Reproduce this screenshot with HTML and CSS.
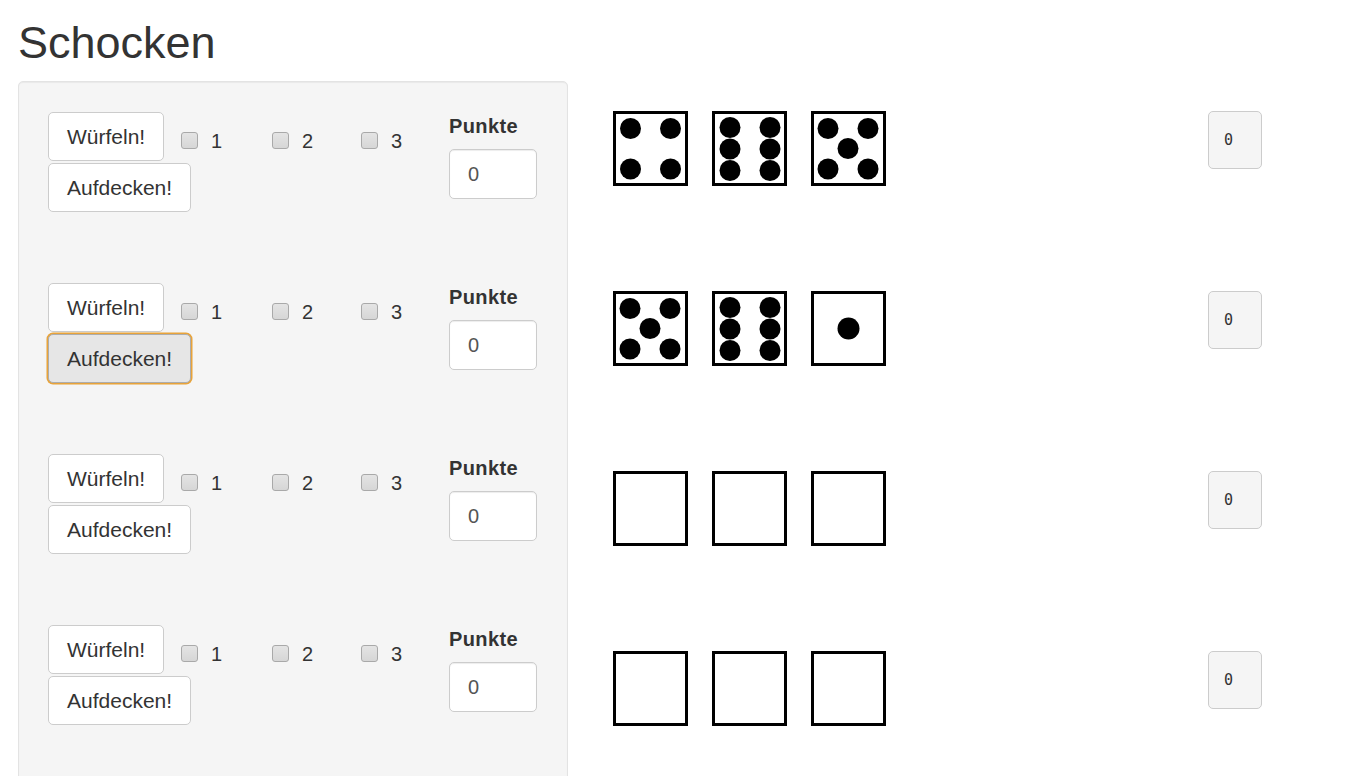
FILE: index.html
```html
<!DOCTYPE html>
<html lang="de">
<head>
<meta charset="utf-8">
<title>Schocken</title>
<link rel="stylesheet" href="styles.css">
</head>
<body>
<div class="page">
  <h1 class="title">Schocken</h1>
  <div class="layout">
    <div class="well">
      <div class="ctrl-row">
        <div class="btns">
          <button class="btn">Würfeln!</button>
          <button class="btn">Aufdecken!</button>
        </div>
        <label class="chk w1"><input type="checkbox"><span>1</span></label>
        <label class="chk w2"><input type="checkbox"><span>2</span></label>
        <label class="chk w3"><input type="checkbox"><span>3</span></label>
        <div class="score">
          <div class="score-label">Punkte</div>
          <input class="score-input" type="text" value="0">
        </div>
      </div>
      <div class="ctrl-row">
        <div class="btns">
          <button class="btn">Würfeln!</button>
          <button class="btn btn-focus">Aufdecken!</button>
        </div>
        <label class="chk w1"><input type="checkbox"><span>1</span></label>
        <label class="chk w2"><input type="checkbox"><span>2</span></label>
        <label class="chk w3"><input type="checkbox"><span>3</span></label>
        <div class="score">
          <div class="score-label">Punkte</div>
          <input class="score-input" type="text" value="0">
        </div>
      </div>
      <div class="ctrl-row">
        <div class="btns">
          <button class="btn">Würfeln!</button>
          <button class="btn">Aufdecken!</button>
        </div>
        <label class="chk w1"><input type="checkbox"><span>1</span></label>
        <label class="chk w2"><input type="checkbox"><span>2</span></label>
        <label class="chk w3"><input type="checkbox"><span>3</span></label>
        <div class="score">
          <div class="score-label">Punkte</div>
          <input class="score-input" type="text" value="0">
        </div>
      </div>
      <div class="ctrl-row">
        <div class="btns">
          <button class="btn">Würfeln!</button>
          <button class="btn">Aufdecken!</button>
        </div>
        <label class="chk w1"><input type="checkbox"><span>1</span></label>
        <label class="chk w2"><input type="checkbox"><span>2</span></label>
        <label class="chk w3"><input type="checkbox"><span>3</span></label>
        <div class="score">
          <div class="score-label">Punkte</div>
          <input class="score-input" type="text" value="0">
        </div>
      </div>
    </div>

    <div class="main">
      <div class="dice-row">
        <div class="dice">
          <svg class="die" viewBox="0 0 75 75"><rect class="face" x="1.5" y="1.5" width="72" height="72"/><circle cx="17.5" cy="17.5" r="10.5"/><circle cx="57.5" cy="17.5" r="10.5"/><circle cx="17.5" cy="58" r="10.5"/><circle cx="57.5" cy="58" r="10.5"/></svg>
          <svg class="die" viewBox="0 0 75 75"><rect class="face" x="1.5" y="1.5" width="72" height="72"/><circle cx="18" cy="16.5" r="10.5"/><circle cx="58" cy="16.5" r="10.5"/><circle cx="18" cy="38" r="10.5"/><circle cx="58" cy="38" r="10.5"/><circle cx="18" cy="59.5" r="10.5"/><circle cx="58" cy="59.5" r="10.5"/></svg>
          <svg class="die" viewBox="0 0 75 75"><rect class="face" x="1.5" y="1.5" width="72" height="72"/><circle cx="17" cy="17.5" r="10.5"/><circle cx="57" cy="17.5" r="10.5"/><circle cx="37" cy="37.5" r="10.5"/><circle cx="17" cy="58" r="10.5"/><circle cx="57" cy="58" r="10.5"/></svg>
        </div>
        <pre class="result">0</pre>
      </div>
      <div class="dice-row">
        <div class="dice">
          <svg class="die" viewBox="0 0 75 75"><rect class="face" x="1.5" y="1.5" width="72" height="72"/><circle cx="17" cy="17.5" r="10.5"/><circle cx="57" cy="17.5" r="10.5"/><circle cx="37" cy="37.5" r="10.5"/><circle cx="17" cy="58" r="10.5"/><circle cx="57" cy="58" r="10.5"/></svg>
          <svg class="die" viewBox="0 0 75 75"><rect class="face" x="1.5" y="1.5" width="72" height="72"/><circle cx="18" cy="16.5" r="10.5"/><circle cx="58" cy="16.5" r="10.5"/><circle cx="18" cy="38" r="10.5"/><circle cx="58" cy="38" r="10.5"/><circle cx="18" cy="59.5" r="10.5"/><circle cx="58" cy="59.5" r="10.5"/></svg>
          <svg class="die" viewBox="0 0 75 75"><rect class="face" x="1.5" y="1.5" width="72" height="72"/><circle cx="37.5" cy="37.5" r="11"/></svg>
        </div>
        <pre class="result">0</pre>
      </div>
      <div class="dice-row">
        <div class="dice">
          <svg class="die" viewBox="0 0 75 75"><rect class="face" x="1.5" y="1.5" width="72" height="72"/></svg>
          <svg class="die" viewBox="0 0 75 75"><rect class="face" x="1.5" y="1.5" width="72" height="72"/></svg>
          <svg class="die" viewBox="0 0 75 75"><rect class="face" x="1.5" y="1.5" width="72" height="72"/></svg>
        </div>
        <pre class="result">0</pre>
      </div>
      <div class="dice-row">
        <div class="dice">
          <svg class="die" viewBox="0 0 75 75"><rect class="face" x="1.5" y="1.5" width="72" height="72"/></svg>
          <svg class="die" viewBox="0 0 75 75"><rect class="face" x="1.5" y="1.5" width="72" height="72"/></svg>
          <svg class="die" viewBox="0 0 75 75"><rect class="face" x="1.5" y="1.5" width="72" height="72"/></svg>
        </div>
        <pre class="result">0</pre>
      </div>
    </div>
  </div>
</div>
</body>
</html>
```

FILE: styles.css
```css
* { box-sizing: border-box; }

html, body {
  margin: 0;
  padding: 0;
  background: #fff;
}

body {
  font-family: "Liberation Sans", Arial, sans-serif;
  font-size: 20px;
  color: #333;
}

.page {
  padding: 0 18px;
}

.title {
  margin: 18px 0 13px;
  font-size: 45px;
  font-weight: 400;
  line-height: 1.1;
  color: #333;
}

.layout {
  display: flex;
  align-items: flex-start;
}

.well {
  flex: 0 0 550px;
  width: 550px;
  background: #f5f5f5;
  border: 1px solid #e3e3e3;
  border-radius: 5px;
  box-shadow: inset 0 1px 1px rgba(0, 0, 0, 0.05);
  padding: 30px 29px 80px;
  display: flex;
  flex-direction: column;
  gap: 71px;
}

.ctrl-row {
  display: flex;
  align-items: flex-start;
  height: 100px;
}

.btns {
  flex: 0 0 133px;
  width: 133px;
  display: flex;
  flex-direction: column;
  align-items: flex-start;
  gap: 2px;
}

.btn {
  font-family: "Liberation Sans", Arial, sans-serif;
  font-size: 21px;
  color: #333;
  background: #fff;
  border: 1px solid #ccc;
  border-radius: 5px;
  height: 49px;
  padding: 0 18px;
  line-height: 1;
  white-space: nowrap;
}

.btn-focus {
  background: #e6e6e6;
  border-color: #adadad;
  box-shadow: 0 0 0 1.5px #e8a33a;
}

.chk {
  display: flex;
  align-items: center;
  margin-top: 20px;
  height: 17px;
}

.chk.w1 { flex: 0 0 91px; }
.chk.w2 { flex: 0 0 89px; }
.chk.w3 { flex: 0 0 88px; }

.chk input {
  appearance: none;
  -webkit-appearance: none;
  margin: 0 13px 0 0;
  width: 17px;
  height: 17px;
  border: 1px solid #a9a9a9;
  border-radius: 3px;
  background: linear-gradient(#e4e4e4, #d6d6d6);
}

.chk span {
  font-size: 20px;
  line-height: 17px;
  position: relative;
  top: 1px;
}

.score {
  display: flex;
  flex-direction: column;
}

.score-label {
  font-weight: 700;
  font-size: 20px;
  line-height: 28.6px;
  letter-spacing: 0.4px;
  margin-bottom: 9px;
}

.score-input {
  width: 88px;
  height: 50px;
  border: 1px solid #ccc;
  border-radius: 5px;
  background: #fff;
  box-shadow: inset 0 1px 1px rgba(0, 0, 0, 0.075);
  padding: 0 18px;
  font-family: "Liberation Sans", Arial, sans-serif;
  font-size: 20px;
  color: #555;
}

.main {
  padding: 30px 0 0 45px;
  display: flex;
  flex-direction: column;
}

.dice-row {
  display: flex;
  align-items: flex-start;
  height: 180px;
}

.dice {
  display: flex;
  gap: 24px;
  width: 273px;
}

.die {
  display: block;
  width: 75px;
  height: 75px;
}

.die .face {
  fill: #fff;
  stroke: #000;
  stroke-width: 3;
}

.die circle {
  fill: #000;
}

.result {
  margin: 0 0 0 322px;
  width: 54px;
  height: 58px;
  display: flex;
  align-items: center;
  padding: 0 0 0 15px;
  background: #f5f5f5;
  border: 1px solid #ccc;
  border-radius: 5px;
  font-family: "DejaVu Sans Mono", "Liberation Mono", monospace;
  font-size: 15px;
  color: #333;
}
```
